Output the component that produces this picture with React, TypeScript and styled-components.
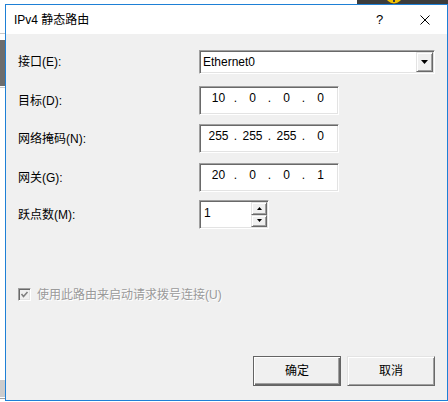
import React from "react";
import styled, { createGlobalStyle, css } from "styled-components";

const UI_FONT = `"Liberation Sans", "Noto Sans CJK SC", sans-serif`;

const GlobalStyle = createGlobalStyle`
  html, body { margin: 0; padding: 0; background: #ffffff; }
  body { width: 448px; height: 402px; overflow: hidden; }
`;

const Desktop = styled.div`
  position: relative;
  width: 448px;
  height: 402px;
  overflow: hidden;
  background: #ffffff;
  font-family: ${UI_FONT};
`;

const Patch = styled.div<{ $x: number; $y: number; $w: number; $h: number; $bg: string }>`
  position: absolute;
  left: ${(p) => p.$x}px;
  top: ${(p) => p.$y}px;
  width: ${(p) => p.$w}px;
  height: ${(p) => p.$h}px;
  background: ${(p) => p.$bg};
`;

const WarnIcon = styled.svg`
  position: absolute;
  left: 384px;
  top: -6px;
`;

const sunken = css`
  box-sizing: border-box;
  border: 1px solid;
  border-color: #a0a0a0 #ffffff #ffffff #a0a0a0;
  box-shadow: inset 1px 1px 0 #696969, inset -1px -1px 0 #e3e3e3;
  background: #ffffff;
`;

const raised = css`
  box-sizing: border-box;
  background: #f0f0f0;
  border: 1px solid;
  border-color: #e3e3e3 #696969 #696969 #e3e3e3;
  box-shadow: inset 1px 1px 0 #ffffff, inset -1px -1px 0 #a0a0a0;
`;

const Window = styled.section`
  position: absolute;
  left: 5px;
  top: 4px;
  width: 443px;
  height: 397px;
  box-sizing: border-box;
  border: 1px solid #1e80d6;
  background: #f0f0f0;
  display: flex;
  flex-direction: column;
  font-size: 12px;
  color: #000000;
`;

const TitleBar = styled.header`
  height: 29px;
  flex: none;
  background: #ffffff;
  display: flex;
  align-items: center;
  padding-left: 8px;
`;

const TitleText = styled.div`
  flex: 1;
  line-height: 16px;
  white-space: nowrap;
`;

const TitleButton = styled.div`
  width: 45px;
  height: 29px;
  display: flex;
  align-items: center;
  justify-content: center;
  font-size: 13px;
  color: #000;
`;

const Body = styled.div`
  flex: 1;
  display: flex;
  flex-direction: column;
  padding: 16px 12px 14px 12px;
`;

const FieldRow = styled.div<{ $mt: number; $h: number }>`
  display: grid;
  grid-template-columns: 181px 1fr;
  align-items: center;
  height: ${(p) => p.$h}px;
  margin-top: ${(p) => p.$mt}px;
`;

const Label = styled.label`
  line-height: 16px;
  white-space: nowrap;
`;

const Combo = styled.div`
  ${sunken};
  height: 24px;
  display: flex;
  padding: 1px;
`;

const ComboText = styled.div`
  flex: 1;
  line-height: 20px;
  padding-left: 2px;
`;

const DropButton = styled.div`
  ${raised};
  width: 17px;
  height: 20px;
  display: flex;
  align-items: center;
  justify-content: center;
`;

const IpBox = styled.div`
  ${sunken};
  width: 140px;
  height: 29px;
  display: flex;
  align-items: flex-start;
  padding: 3px 0 0 5px;
`;

const Octet = styled.span`
  width: 27px;
  text-align: center;
  line-height: 16px;
`;

const Dot = styled.span`
  width: 7px;
  text-align: center;
  line-height: 16px;
`;

const Spinner = styled.div`
  ${sunken};
  width: 70px;
  height: 29px;
  display: flex;
  padding: 1px;
`;

const SpinText = styled.div`
  flex: 1;
  line-height: 16px;
  padding: 3px 0 0 3px;
`;

const SpinButtons = styled.div`
  width: 16px;
  display: flex;
  flex-direction: column;
`;

const SpinButton = styled.div`
  ${raised};
  flex: 1;
  display: flex;
  align-items: center;
  justify-content: center;
`;

const CheckRow = styled.div`
  margin-top: 59px;
  height: 13px;
  display: flex;
  align-items: center;
  gap: 6px;
`;

const CheckBox = styled.div`
  ${sunken};
  width: 13px;
  height: 13px;
  background: #f0f0f0;
  display: flex;
  align-items: center;
  justify-content: center;
`;

const CheckLabel = styled.span`
  color: #9a9a9a;
  text-shadow: 1px 1px 0 #ffffff;
  line-height: 16px;
  white-space: nowrap;
`;

const ButtonBar = styled.div`
  margin-top: auto;
  display: flex;
  justify-content: flex-end;
  gap: 6px;
`;

const PushButton = styled.div<{ $default?: boolean }>`
  ${raised};
  width: 88px;
  height: 30px;
  display: flex;
  align-items: center;
  justify-content: center;
  line-height: 16px;
  ${(p) =>
    p.$default &&
    css`
      border-color: #646464;
      box-shadow: inset 1px 1px 0 #ffffff, inset -1px -1px 0 #696969, inset -2px -2px 0 #a0a0a0;
    `}
`;

const DownArrow = ({ w = 7, h = 4 }: { w?: number; h?: number }) => (
  <svg width={w} height={h} viewBox={`0 0 ${w} ${h}`}>
    <polygon points={`0,0 ${w},0 ${w / 2},${h}`} fill="#000" />
  </svg>
);

const UpArrow = ({ w = 5, h = 3 }: { w?: number; h?: number }) => (
  <svg width={w} height={h} viewBox={`0 0 ${w} ${h}`}>
    <polygon points={`0,${h} ${w},${h} ${w / 2},0`} fill="#000" />
  </svg>
);

const IpAddress = ({ value }: { value: string[] }) => (
  <IpBox>
    {value.map((o, i) => (
      <React.Fragment key={i}>
        <Octet>{o}</Octet>
        {i < 3 && <Dot>.</Dot>}
      </React.Fragment>
    ))}
  </IpBox>
);

export default function App() {
  return (
    <Desktop>
      <GlobalStyle />
      <Patch $x={0} $y={33} $w={5} $h={1} $bg="#c8c8c8" />
      <Patch $x={0} $y={40} $w={5} $h={46} $bg="#6d6d6d" />
      <Patch $x={0} $y={87} $w={5} $h={1} $bg="#c8c8c8" />
      <Patch $x={0} $y={380} $w={5} $h={17} $bg="#cccccc" />
      <Patch $x={0} $y={398} $w={5} $h={1} $bg="#a0a0a0" />
      <Patch $x={357} $y={0} $w={91} $h={4} $bg="#3c3c3c" />
      <WarnIcon width="20" height="10" viewBox="0 0 20 10">
        <circle cx="10" cy="1" r="8.5" fill="#f2c200" />
        <rect x="9" y="5" width="2" height="3" fill="#3c3c3c" />
      </WarnIcon>

      <Window>
        <TitleBar>
          <TitleText>IPv4 静态路由</TitleText>
          <TitleButton>?</TitleButton>
          <TitleButton>
            <svg width="10" height="10" viewBox="0 0 10 10">
              <path d="M0.5 0.5 L9.5 9.5 M9.5 0.5 L0.5 9.5" stroke="#000" strokeWidth="1" fill="none" />
            </svg>
          </TitleButton>
        </TitleBar>
        <Body>
          <FieldRow $mt={0} $h={24}>
            <Label>接口(E):</Label>
            <Combo>
              <ComboText>Ethernet0</ComboText>
              <DropButton>
                <DownArrow />
              </DropButton>
            </Combo>
          </FieldRow>
          <FieldRow $mt={12} $h={29}>
            <Label>目标(D):</Label>
            <IpAddress value={["10", "0", "0", "0"]} />
          </FieldRow>
          <FieldRow $mt={9} $h={29}>
            <Label>网络掩码(N):</Label>
            <IpAddress value={["255", "255", "255", "0"]} />
          </FieldRow>
          <FieldRow $mt={10} $h={29}>
            <Label>网关(G):</Label>
            <IpAddress value={["20", "0", "0", "1"]} />
          </FieldRow>
          <FieldRow $mt={8} $h={29}>
            <Label>跃点数(M):</Label>
            <Spinner>
              <SpinText>1</SpinText>
              <SpinButtons>
                <SpinButton>
                  <UpArrow />
                </SpinButton>
                <SpinButton>
                  <DownArrow w={5} h={3} />
                </SpinButton>
              </SpinButtons>
            </Spinner>
          </FieldRow>
          <CheckRow>
            <CheckBox>
              <svg width="9" height="9" viewBox="0 0 9 9">
                <polyline points="1.5,4 3.5,6.5 7.5,2" stroke="#808080" strokeWidth="1.6" fill="none" />
              </svg>
            </CheckBox>
            <CheckLabel>使用此路由来启动请求拨号连接(U)</CheckLabel>
          </CheckRow>
          <ButtonBar>
            <PushButton $default>确定</PushButton>
            <PushButton>取消</PushButton>
          </ButtonBar>
        </Body>
      </Window>
    </Desktop>
  );
}
